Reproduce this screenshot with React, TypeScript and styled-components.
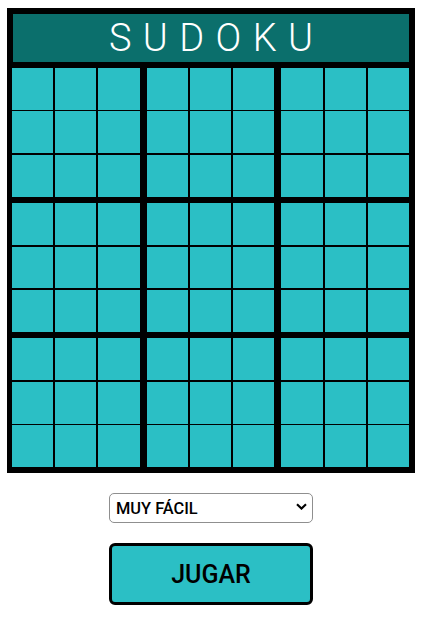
import { FC } from "react";
import styled, { createGlobalStyle } from "styled-components";

const GlobalStyle = createGlobalStyle`
  body {
    margin: 0;
    background: #ffffff;
    font-family: "Roboto", "Liberation Sans", sans-serif;
  }
`;

const Page = styled("main")`
  display: flex;
  flex-direction: column;
  align-items: center;
  padding: 8px 1px 0 0;
`;

const Frame = styled("div")`
  width: 408px;
  box-sizing: border-box;
  background: #000000;
  padding: 6px 6px 6px 5px;
  display: flex;
  flex-direction: column;
  gap: 6px;
`;

const Header = styled("h1")`
  margin: 0 0 0 1px;
  height: 48px;
  background: #0b6f6c;
  color: #ffffff;
  font-family: "Roboto", sans-serif;
  font-weight: 300;
  font-size: 38px;
  line-height: 48px;
  letter-spacing: 0.3em;
  text-align: center;
  padding-left: 0.3em;
`;

const Board = styled("div")`
  display: grid;
  grid-template-columns: repeat(3, 1fr);
  grid-template-rows: repeat(3, 1fr);
  column-gap: 7px;
  row-gap: 6.5px;
  height: 399px;
`;

const Box = styled("div")`
  display: grid;
  grid-template-columns: repeat(3, 1fr);
  grid-template-rows: repeat(3, 1fr);
  gap: 1.6px 2px;
`;

const Cell = styled("div")`
  background: #2bbfc5;
`;

const Controls = styled("div")`
  display: flex;
  flex-direction: column;
  align-items: center;
  gap: 20px;
  margin-top: 20px;
`;

const SelectWrap = styled("div")`
  position: relative;
  width: 204px;
  height: 30px;
`;

const Select = styled("select")`
  appearance: none;
  width: 100%;
  height: 100%;
  box-sizing: border-box;
  border: 1px solid #8f8f8f;
  border-radius: 5px;
  background: #ffffff;
  color: #000000;
  font-family: "Roboto", sans-serif;
  font-weight: 500;
  font-size: 16.4px;
  padding: 0 24px 0 6px;
`;

const Chevron = styled("svg")`
  position: absolute;
  right: 6px;
  top: 10px;
  width: 11px;
  height: 7px;
  pointer-events: none;
`;

const PlayButton = styled("button")`
  width: 204px;
  height: 62px;
  border: 3px solid #000000;
  border-radius: 6px;
  background: #2bbfc5;
  color: #000000;
  font-family: "Roboto", sans-serif;
  font-weight: 500;
  font-size: 25px;
`;

const boxes = Array.from({ length: 9 }, (_, i) => i);
const cells = Array.from({ length: 9 }, (_, i) => i);

const App: FC = () => {
  return (
    <>
      <GlobalStyle />
      <Page>
        <Frame>
          <Header>SUDOKU</Header>
          <Board>
            {boxes.map((b) => (
              <Box key={b}>
                {cells.map((c) => (
                  <Cell key={c} />
                ))}
              </Box>
            ))}
          </Board>
        </Frame>
        <Controls>
          <SelectWrap>
            <Select defaultValue="muy-facil">
              <option value="muy-facil">MUY FÁCIL</option>
              <option value="facil">FÁCIL</option>
              <option value="medio">MEDIO</option>
              <option value="dificil">DIFÍCIL</option>
            </Select>
            <Chevron viewBox="0 0 11 7">
              <path d="M1 1.2 L5.5 5.6 L10 1.2" fill="none" stroke="#000" strokeWidth="2.1" />
            </Chevron>
          </SelectWrap>
          <PlayButton>JUGAR</PlayButton>
        </Controls>
      </Page>
    </>
  );
};

export default App;
